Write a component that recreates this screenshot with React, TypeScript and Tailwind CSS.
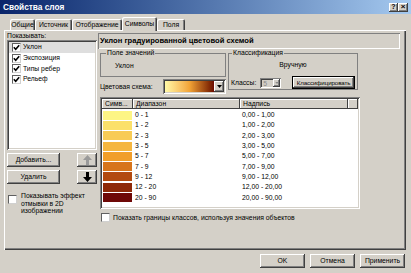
import React from "react";

const RAISED =
  "shadow-[inset_-1px_-1px_#404040,inset_1px_1px_#ffffff,inset_-2px_-2px_#808080]";
const SUNKEN =
  "shadow-[inset_1px_1px_#808080,inset_-1px_-1px_#ffffff,inset_2px_2px_#404040,inset_-2px_-2px_#d4d0c8]";

const TABS: { label: string; w: string; active?: boolean }[] = [
  { label: "Общие", w: "w-[25px]" },
  { label: "Источник", w: "w-[37px]" },
  { label: "Отображение", w: "w-[50px]" },
  { label: "Символы", w: "w-[35px]", active: true },
  { label: "Поля", w: "w-[28px]" },
];

const LAYERS = ["Уклон", "Экспозиция", "Типы ребер", "Рельеф"];

// classes of the graduated colour scheme
const CLASSES: { range: string; label: string; color: string }[] = [
  { range: "0 - 1", label: "0,00 - 1,00", color: "bg-[#fdf585]" },
  { range: "1 - 2", label: "1,00 - 2,00", color: "bg-[#fbe06a]" },
  { range: "2 - 3", label: "2,00 - 3,00", color: "bg-[#f8cb55]" },
  { range: "3 - 5", label: "3,00 - 5,00", color: "bg-[#f5b640]" },
  { range: "5 - 7", label: "5,00 - 7,00", color: "bg-[#f19e2a]" },
  { range: "7 - 9", label: "7,00 - 9,00", color: "bg-[#d7751c]" },
  { range: "9 - 12", label: "9,00 - 12,00", color: "bg-[#b24a10]" },
  { range: "12 - 20", label: "12,00 - 20,00", color: "bg-[#8e2908]" },
  { range: "20 - 90", label: "20,00 - 90,00", color: "bg-[#6e0806]" },
];

function Check({ checked }: { checked?: boolean }) {
  return (
    <span className="inline-flex w-[9px] h-[9px] shrink-0 items-center justify-center bg-white border border-t-[#606060] border-l-[#606060] border-b-[#d0d0d0] border-r-[#d0d0d0]">
      {checked && (
        <svg viewBox="0 0 7 7" className="w-[7px] h-[7px]">
          <path d="M0.8 3.2 L2.7 5.2 L6.2 1.2" stroke="#000" strokeWidth="1.6" fill="none" />
        </svg>
      )}
    </span>
  );
}

function Arrow({ up, color }: { up?: boolean; color: string }) {
  return (
    <svg viewBox="0 0 9 10" className="w-[9px] h-[10px]">
      <path
        d={up ? "M4.5 0 L9 5 L6 5 L6 10 L3 10 L3 5 L0 5 Z" : "M4.5 10 L9 5 L6 5 L6 0 L3 0 L3 5 L0 5 Z"}
        fill={color}
      />
    </svg>
  );
}

export default function App() {
  return (
    <div className="w-[411px] h-[273px] overflow-hidden bg-[#d4d0c8] text-[6.8px] leading-[8px] text-black font-['Liberation_Sans',Arial,sans-serif] flex flex-col">
      {/* title bar */}
      <div className="h-[14px] shrink-0 flex items-center pl-[3px] pr-[3px] bg-linear-to-r from-[#0a246a] to-[#a6caf0]">
        <span className="text-white font-bold text-[8.3px]">Свойства слоя</span>
        <div className="ml-auto flex">
          <div className={`w-[9px] h-[9px] bg-[#d4d0c8] flex items-center justify-center text-[7px] font-bold ${RAISED}`}>?</div>
          <div className={`w-[10px] h-[9px] bg-[#d4d0c8] flex items-center justify-center text-[8px] font-bold ${RAISED}`}>×</div>
        </div>
      </div>

      {/* tabs */}
      <div className="mt-[3px] h-[13px] pl-[10px] flex items-end relative z-10">
        {TABS.map((t) =>
          t.active ? (
            <div
              key={t.label}
              className={`${t.w} h-[14px] -mb-px bg-[#d4d0c8] rounded-t-[2px] flex items-center justify-center shadow-[inset_1px_1px_#ffffff,inset_-1px_0_#404040,inset_-2px_0_#808080]`}
            >
              {t.label}
            </div>
          ) : (
            <div
              key={t.label}
              className={`${t.w} h-[11px] rounded-t-[2px] flex items-center justify-center shadow-[inset_1px_1px_#ffffff,inset_-1px_0_#404040,inset_-2px_0_#808080]`}
            >
              {t.label}
            </div>
          )
        )}
      </div>

      {/* tab page */}
      <div className="ml-[4px] w-[402px] h-[220px] shrink-0 flex pl-[3px] shadow-[inset_1px_1px_#ffffff,inset_-1px_-1px_#404040,inset_-2px_-2px_#808080]">
        {/* left column */}
        <div className="w-[90px] flex flex-col">
          <div className="pt-[2px] h-[10px]">Показывать:</div>
          <div className={`h-[110px] bg-white p-[2px] flex flex-col ${SUNKEN}`}>
            {LAYERS.map((l, i) => (
              <div
                key={l}
                className={`h-[10.7px] flex items-center gap-[2px] pl-[3px] ${i === 0 ? "bg-[#dedede]" : ""}`}
              >
                <Check checked />
                <span>{l}</span>
              </div>
            ))}
          </div>
          <div className="mt-[3px] flex">
            <div className={`w-[53px] h-[14px] flex items-center justify-center ${RAISED}`}>Добавить...</div>
            <div className={`ml-auto w-[20px] h-[14px] flex items-center justify-center ${RAISED}`}>
              <Arrow up color="#9a9a9a" />
            </div>
          </div>
          <div className="mt-[3px] flex">
            <div className={`w-[53px] h-[14px] flex items-center justify-center ${RAISED}`}>Удалить</div>
            <div className={`ml-auto w-[20px] h-[14px] flex items-center justify-center ${RAISED}`}>
              <Arrow color="#000" />
            </div>
          </div>
          <div className="mt-[8px] flex items-start gap-[4px] pl-[1px]">
            <span className="mt-[3px]">
              <Check />
            </span>
            <span className="w-[66px] leading-[7.7px]">Показывать эффект отмывки в 2D изображении</span>
          </div>
        </div>

        {/* right column */}
        <div className="ml-[1px] w-[302px] flex flex-col">
          <div className="mt-[3px] h-[16px] flex items-center pl-[2px] font-bold text-[7.6px] shadow-[inset_1px_1px_#808080,inset_-1px_-1px_#ffffff]">
            Уклон градуированной цветовой схемой
          </div>

          <div className="flex">
            <div className="ml-[2px] w-[126px] flex flex-col">
              <fieldset className="h-[28px] border border-[#808080]">
                <legend className="ml-[5px] px-[1px]">Поле значений</legend>
                <div className="mt-[5px] pl-[14px]">Уклон</div>
              </fieldset>
              <div className="mt-[2px] h-[15px] flex items-center">
                <span>Цветовая схема:</span>
                <div className={`ml-auto w-[63px] h-[15px] p-[2px] flex bg-white ${SUNKEN}`}>
                  <div className="flex-1 bg-linear-to-r from-[#fff9a6] via-[#f2a436] to-[#6b0800]" />
                  <div className={`w-[10px] bg-[#d4d0c8] flex items-center justify-center ${RAISED}`}>
                    <svg viewBox="0 0 5 3" className="w-[5px] h-[3px]">
                      <path d="M0 0 L5 0 L2.5 3 Z" fill="#000" />
                    </svg>
                  </div>
                </div>
              </div>
            </div>

            <fieldset className="ml-[2px] w-[130px] h-[41px] border border-[#808080] px-[2px] flex flex-col">
              <legend className="ml-[1px] px-[1px]">Классификация</legend>
              <div className="mt-[4px] text-center">Вручную</div>
              <div className="mt-[7px] h-[13px] flex items-center">
                <span>Классы:</span>
                <div className={`ml-[4px] w-[21px] h-[10px] p-[1px] flex bg-[#d4d0c8] ${SUNKEN}`}>
                  <span className="flex-1 pl-[2px] pt-[1px] text-[#8a8a8a]">5</span>
                  <div className={`w-[7px] flex items-center justify-center ${RAISED}`}>
                    <svg viewBox="0 0 5 3" className="w-[4px] h-[2px]">
                      <path d="M0 0 L5 0 L2.5 3 Z" fill="#8a8a8a" />
                    </svg>
                  </div>
                </div>
                <div className={`ml-auto w-[63px] h-[13px] border border-black flex items-center justify-center whitespace-nowrap text-[6.2px] tracking-[-0.1px] ${RAISED}`}>
                  Классифицировать
                </div>
              </div>
            </fieldset>
          </div>

          {/* class table */}
          <div className={`mt-[3px] ml-[2px] w-[260px] h-[112px] bg-white p-[2px] flex flex-col ${SUNKEN}`}>
            <div className="h-[10px] flex bg-[#d4d0c8]">
              <div className="w-[31px] pl-[3px] flex items-center shadow-[inset_-1px_-1px_#404040,inset_1px_1px_#ffffff]">Симв...</div>
              <div className="w-[107px] pl-[3px] flex items-center shadow-[inset_-1px_-1px_#404040,inset_1px_1px_#ffffff]">Диапазон</div>
              <div className="w-[108px] pl-[3px] flex items-center shadow-[inset_-1px_-1px_#404040,inset_1px_1px_#ffffff]">Надпись</div>
              <div className="flex-1 shadow-[inset_-1px_-1px_#404040,inset_1px_1px_#ffffff]" />
            </div>
            <div className="pt-[1px] flex flex-col">
              {CLASSES.map((c) => (
                <div key={c.range} className="h-[10.3px] flex items-center">
                  <div className="w-[31px] pl-[1px]">
                    <div className={`w-[29px] h-[9px] ${c.color}`} />
                  </div>
                  <div className="w-[107px] pl-[2px]">{c.range}</div>
                  <div className="w-[108px] pl-[2px]">{c.label}</div>
                </div>
              ))}
            </div>
          </div>

          <div className="mt-[4px] ml-[3px] flex items-center gap-[3px]">
            <Check />
            <span>Показать границы классов, используя значения объектов</span>
          </div>
        </div>
      </div>

      {/* dialog buttons */}
      <div className="mt-[4px] pr-[6px] flex justify-end gap-[5px]">
        <div className={`w-[45px] h-[14px] flex items-center justify-center ${RAISED}`}>OK</div>
        <div className={`w-[45px] h-[14px] flex items-center justify-center ${RAISED}`}>Отмена</div>
        <div className={`w-[45px] h-[14px] flex items-center justify-center ${RAISED}`}>Применить</div>
      </div>
    </div>
  );
}
